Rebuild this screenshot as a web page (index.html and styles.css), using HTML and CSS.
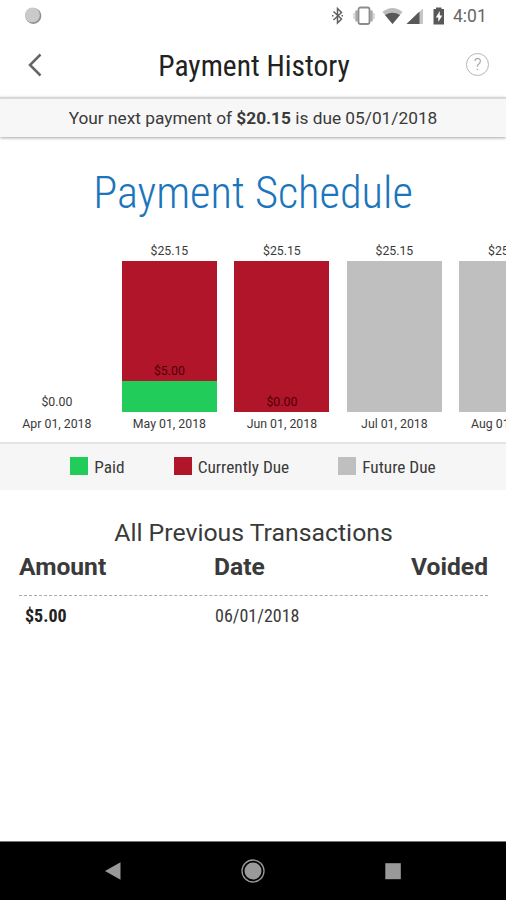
FILE: index.html
```html
<!DOCTYPE html>
<html lang="en">
<head>
    <meta charset="UTF-8">
    <meta name="viewport" content="width=device-width, initial-scale=1.0">
    <title>Payment History</title>
    <link rel="stylesheet" href="styles.css">
</head>
<body>
    <div class="status-bar">
        <svg class="status-dot" width="18" height="18" viewBox="0 0 18 18">
            <circle cx="9.3" cy="8.9" r="8" fill="#8f8f8f"/>
            <circle cx="8.4" cy="7.900" r="7.400" fill="#cacaca"/>
        </svg>
        <svg class="status-icons" width="118" height="22" viewBox="0 0 118 22">
            <!-- bluetooth -->
            <path d="M2.500 6.500l8 7.500-4 4V3.500l4 4-8 7.500" fill="none" stroke="#616161" stroke-width="1.500"/>
            <path d="M1 10.700h1.500M10.500 10.700h1.500" stroke="#616161" stroke-width="1.500"/>
            <!-- vibrate -->
            <path d="M25.500 5.500v11M40.500 5.500v11" stroke="#a9a9a9" stroke-width="2.500"/>
            <path d="M23 8v6M43 8v6" stroke="#cfcfcf" stroke-width="1.500"/>
            <rect x="27.500" y="2.500" width="11" height="16.500" rx="2" fill="#fff" stroke="#8c8c8c" stroke-width="1.800"/>
            <!-- wifi -->
            <path d="M61.500 19L51.500 7q10-8 20 0z" fill="#bdbdbd"/>
            <path d="M61.500 19l-7.500-9q7.500-4.500 15 0z" fill="#585858"/>
            <!-- signal -->
            <path d="M75.500 19L92 3.500V19z" fill="#c6c6c6"/>
            <path d="M75.500 19L88.500 6.500V19z" fill="#585858"/>
            <!-- battery -->
            <path d="M102.500 4h2.500V2.500h5.500V4h2.500V19.500H102.500z" fill="#585858"/>
            <path d="M108.800 6l-4 6.500h2.500v4.500l4-6.500h-2.500z" fill="#fff"/>
        </svg>
        <span class="clock">4:01</span>
    </div>

    <div class="header">
        <svg class="back" width="14" height="24" viewBox="0 0 14 24">
            <path d="M12.500 1.500L2 12l10.500 10.500" fill="none" stroke="#666" stroke-width="2.500"/>
        </svg>
        <h1>Payment History</h1>
        <div class="help">?</div>
    </div>

    <div class="notice">
        <span>Your next payment of <b>$20.15</b> is due 05/01/2018</span>
    </div>

    <h2>Payment Schedule</h2>

    <div class="chart">
        <div class="column">
            <div class="value">$0.00</div>
            <div class="date">Apr 01, 2018</div>
        </div>
        <div class="column">
            <div class="value">$25.15</div>
            <div class="bar due">
                <div class="value">$5.00</div>
                <div class="paid-part"></div>
            </div>
            <div class="date">May 01, 2018</div>
        </div>
        <div class="column">
            <div class="value">$25.15</div>
            <div class="bar due">
                <div class="value">$0.00</div>
            </div>
            <div class="date">Jun 01, 2018</div>
        </div>
        <div class="column">
            <div class="value">$25.15</div>
            <div class="bar future"></div>
            <div class="date">Jul 01, 2018</div>
        </div>
        <div class="column">
            <div class="value">$25.15</div>
            <div class="bar future"></div>
            <div class="date">Aug 01, 2018</div>
        </div>
    </div>

    <div class="legend">
        <div class="legend-item"><i class="swatch paid"></i><span>Paid</span></div>
        <div class="legend-item"><i class="swatch due"></i><span>Currently Due</span></div>
        <div class="legend-item"><i class="swatch future"></i><span>Future Due</span></div>
    </div>

    <div class="transactions">
        <h3>All Previous Transactions</h3>
        <div class="row head">
            <span>Amount</span>
            <span>Date</span>
            <span>Voided</span>
        </div>
        <div class="row">
            <span class="amount">$5.00</span>
            <span>06/01/2018</span>
            <span></span>
        </div>
    </div>

    <div class="nav-bar">
        <svg width="24" height="24" viewBox="0 0 24 24">
            <path d="M4 12L19.500 3.200v17.600z" fill="#999"/>
        </svg>
        <svg width="24" height="24" viewBox="0 0 24 24">
            <circle cx="12" cy="12" r="11" fill="none" stroke="#999" stroke-width="1.300"/>
            <circle cx="12" cy="12" r="8.500" fill="#999"/>
        </svg>
        <svg width="24" height="24" viewBox="0 0 24 24">
            <rect x="4.300" y="4.200" width="15.500" height="16" fill="#999"/>
        </svg>
    </div>
</body>
</html>
```
FILE: styles.css
```css
* {
    box-sizing: border-box;
}
body {
    font-family: Roboto, "Liberation Sans", sans-serif;
    margin: 0;
    height: 900px;
    display: flex;
    flex-direction: column;
    overflow: hidden;
    background-color: #fff;
    color: #3a3a3a;
}
h1, h2, h3 {
    margin: 0;
    text-align: center;
    white-space: nowrap;
}
.status-bar {
    height: 32px;
    display: flex;
    align-items: center;
    padding: 0 18px 0 24px;
}
.status-dot {
    margin-top: -1px;
}
.status-icons {
    margin-left: auto;
    margin-top: -1px;
}
.clock {
    width: 35px;
    margin-left: 4px;
    font-size: 17.5px;
    color: #666;
}
.header {
    height: 65px;
    display: flex;
    align-items: center;
    justify-content: space-between;
    padding: 0 17px 0 28px;
}
h1 {
    font-family: "Roboto Condensed", Roboto, sans-serif;
    font-stretch: 75%;
    font-size: 29.5px;
    font-weight: 400;
    color: #222;
    padding-top: 3px;
}
.help {
    width: 23px;
    height: 23px;
    border: 1px solid #b5b5b5;
    border-radius: 50%;
    font-size: 17px;
    font-weight: 300;
    line-height: 21px;
    text-align: center;
    color: #999;
}
.notice {
    height: 40px;
    display: flex;
    align-items: center;
    justify-content: center;
    border-top: 2px solid #d8d8d8;
    background-color: #f7f7f7;
    box-shadow: 0 1px 3px rgba(0,0,0,0.35);
    font-size: 17.3px;
}
h2 {
    font-family: "Roboto Condensed", Roboto, sans-serif;
    font-stretch: 75%;
    font-size: 44.5px;
    font-weight: 300;
    line-height: 52px;
    margin-top: 30px;
    color: #1b75bc;
}
.chart {
    height: 223px;
    display: flex;
    align-items: flex-end;
    gap: 17.5px;
    padding: 0 0 8px 9.4px;
}
.column {
    flex: 0 0 95px;
    text-align: center;
    font-size: 12.3px;
    white-space: nowrap;
}
.value {
    height: 18px;
    line-height: 16px;
}
.date {
    height: 22px;
    line-height: 25px;
}
.bar {
    height: 151px;
    display: flex;
    flex-direction: column;
    justify-content: flex-end;
}
.bar .value {
    color: #4d0008;
}
.paid-part {
    height: 31px;
    background-color: #22cc5b;
}
.paid {
    background-color: #22cc5b;
}
.due {
    background-color: #b01529;
}
.future {
    background-color: #bfbfbf;
}
.legend {
    height: 48px;
    display: flex;
    align-items: center;
    justify-content: center;
    gap: 49px;
    border-top: 2px solid #e4e4e4;
    background-color: #f6f6f6;
    font-family: "Roboto Condensed", Roboto, sans-serif;
    font-stretch: 75%;
    font-size: 17.3px;
}
.legend-item {
    display: flex;
    align-items: center;
    gap: 6px;
}
.swatch {
    width: 18px;
    height: 18px;
    margin-top: -2px;
}
.transactions {
    padding: 28px 18px 0 19px;
}
h3 {
    font-size: 24.8px;
    font-weight: 400;
    line-height: 30px;
}
.row {
    display: grid;
    grid-template-columns: 196px 1fr auto;
    height: 39px;
    align-items: center;
    font-family: "Roboto Condensed", Roboto, sans-serif;
    font-stretch: 75%;
    font-size: 18px;
}
.head {
    grid-template-columns: 195px 1fr auto;
    height: 48px;
    align-items: start;
    border-bottom: 1px dashed #aaa;
    font-family: Roboto, sans-serif;
    font-stretch: normal;
    font-size: 24.6px;
    font-weight: 700;
    line-height: 37px;
}
.amount {
    padding-left: 6px;
    font-weight: 700;
    color: #222;
}
.nav-bar {
    height: 59px;
    margin-top: auto;
    display: flex;
    align-items: center;
    justify-content: center;
    gap: 116px;
    border-top: 1px solid #777;
    background-color: #000;
}
```
